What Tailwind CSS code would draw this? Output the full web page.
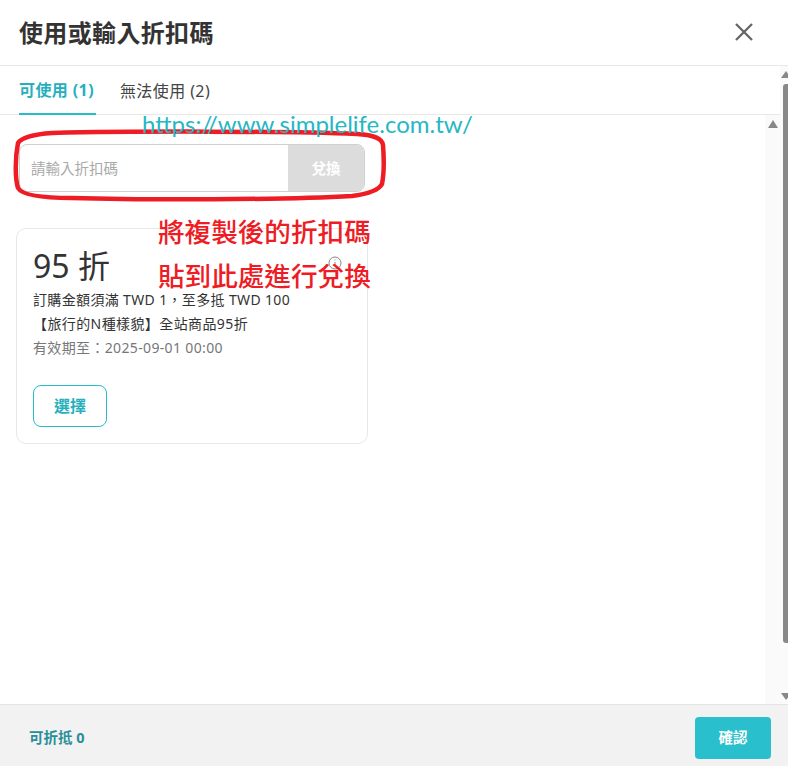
<!DOCTYPE html>
<html lang="zh-Hant">
<head>
  <meta charset="UTF-8" />
  <title>使用或輸入折扣碼</title>
  <script src="https://cdn.jsdelivr.net/npm/@tailwindcss/browser@4"></script>
</head>
<body class="bg-white">
  <div class="relative w-[788px] h-[766px] flex flex-col overflow-hidden text-[#333] font-['Noto_Sans','Noto_Sans_CJK_TC',sans-serif]">
    <!-- header -->
    <header class="h-[66px] shrink-0 flex items-center justify-between pl-[19px] pr-[33px] border-b border-[#e8e8e8]">
      <h1 class="text-[24px] font-bold tracking-[0.35px] text-[#333]">使用或輸入折扣碼</h1>
      <svg class="w-[22px] h-[22px] -mt-[2px]" viewBox="0 0 22 22" fill="none" stroke="#666" stroke-width="2.300"><path d="M3 3 19 19M19 3 3 19" /></svg>
    </header>

    <div class="flex-1 flex min-h-0">
      <div class="flex-1 flex flex-col min-w-0">
        <!-- tabs -->
        <nav class="h-[49px] shrink-0 flex gap-[24px] px-[19px] border-b border-[#e8e8e8] text-[16px] tracking-[0.4px] mr-[8px]">
          <div class="h-[49px] flex items-center pt-[1px] pr-[2px] border-b-2 border-[#26bcc9] font-bold text-[#26b0bd]">可使用 (1)</div>
          <div class="h-[48px] flex items-center pt-[2px] text-[#444]">無法使用 (2)</div>
        </nav>

        <div class="flex-1 flex min-h-0">
          <main class="flex-1 pl-[16px] pt-[29px]">
            <!-- code input -->
            <div class="ml-[3px] w-[346px] h-[48px] flex border border-[#d0d0d0] rounded-[8px] overflow-hidden">
              <div class="flex-1 flex items-center pl-[11px] pt-[1px] text-[14.500px] text-[#aaa]">請輸入折扣碼</div>
              <button class="w-[76px] pt-[1px] bg-[#dcdcdc] text-white text-[14.500px] font-bold">兌換</button>
            </div>

            <!-- coupon card -->
            <article class="mt-[36px] w-[352px] h-[216px] border border-[#e8e8e8] rounded-[10px] px-[16px] pt-[15px]">
              <div class="text-[32px] leading-[44px] text-[#333]">95 折</div>
              <p class="text-[14px] leading-[24px] text-[#333] tracking-[0.35px]">訂購金額須滿 TWD 1，至多抵 TWD 100</p>
              <p class="text-[14px] leading-[24px] text-[#333] tracking-[0.4px]">【旅行的N種樣貌】全站商品95折</p>
              <p class="text-[14px] leading-[24px] text-[#777] tracking-[0.35px]">有效期至：2025-09-01 00:00</p>
              <button class="mt-[25px] w-[74px] h-[42px] border border-[#26bcc9] rounded-[8px] text-[16px] font-bold text-[#26b0bd]">選擇</button>
            </article>
          </main>
          <!-- inner scrollbar -->
          <div class="w-[15px] mr-[8px] bg-[#fafafa] pl-[3px] pt-[5px]">
            <div class="w-0 h-0 border-x-[5px] border-x-transparent border-b-[8px] border-b-[#888]"></div>
          </div>
        </div>
      </div>
    </div>

    <!-- footer -->
    <footer class="h-[62px] shrink-0 flex items-center justify-between pl-[29px] pr-[17px] pt-[4px] bg-[#f2f2f2] border-t border-[#e4e4e4]">
      <span class="text-[14.500px] font-bold text-[#2a8f99]">可折抵 0</span>
      <button class="w-[76px] h-[42px] rounded-[4px] bg-[#29bfcc] text-white text-[14.500px] font-bold">確認</button>
    </footer>

    <!-- outer scrollbar -->
    <div class="absolute right-0 top-[66px] bottom-[62px] w-[8px] bg-[#fafafa]"></div>
    <div class="absolute right-[-3px] top-[71px] w-0 h-0 border-x-[5px] border-x-transparent border-b-[7px] border-b-[#888]"></div>
    <div class="absolute right-0 top-[84px] w-[5px] h-[559px] rounded-l-[3px] bg-[#888]"></div>
    <div class="absolute right-[-3px] top-[693px] w-0 h-0 border-x-[5px] border-x-transparent border-t-[7px] border-t-[#888]"></div>

    <!-- pasted annotations -->
    <svg class="absolute left-[328px] top-[256px]" width="14" height="14" viewBox="0 0 14 14" fill="none" stroke="#888"><circle cx="7" cy="7" r="6" /><path d="M7 6v4M7 3.500v1" /></svg>
    <svg class="absolute left-[12px] top-[128px]" width="376" height="76" viewBox="0 0 376 76" fill="none"><path d="M40 5C120 3 270 3 345 6C362 7 370 10 371 17C372 30 372 46 370 56C367 62 355 66 340 68C270 72 130 72 60 70C30 70 10 67 6 60C3 50 3 30 6 15C10 9 25 6 40 5Z" stroke="#ee1c25" stroke-width="4.500" /></svg>
    <div class="absolute left-[142px] top-[108px] text-[24px] leading-[32px] text-[#26b7c4] font-['Lato',sans-serif]">https://www.simplelife.com.tw/</div>
    <div class="absolute left-[158px] top-[213px] text-[26.600px] leading-[36px] font-medium text-[#ee1c25] font-['Noto_Sans_CJK_TC',sans-serif]">將複製後的折扣碼</div>
    <div class="absolute left-[158px] top-[257px] text-[26.600px] leading-[36px] font-medium text-[#ee1c25] font-['Noto_Sans_CJK_TC',sans-serif]">貼到此處進行兌換</div>
  </div>
</body>
</html>
